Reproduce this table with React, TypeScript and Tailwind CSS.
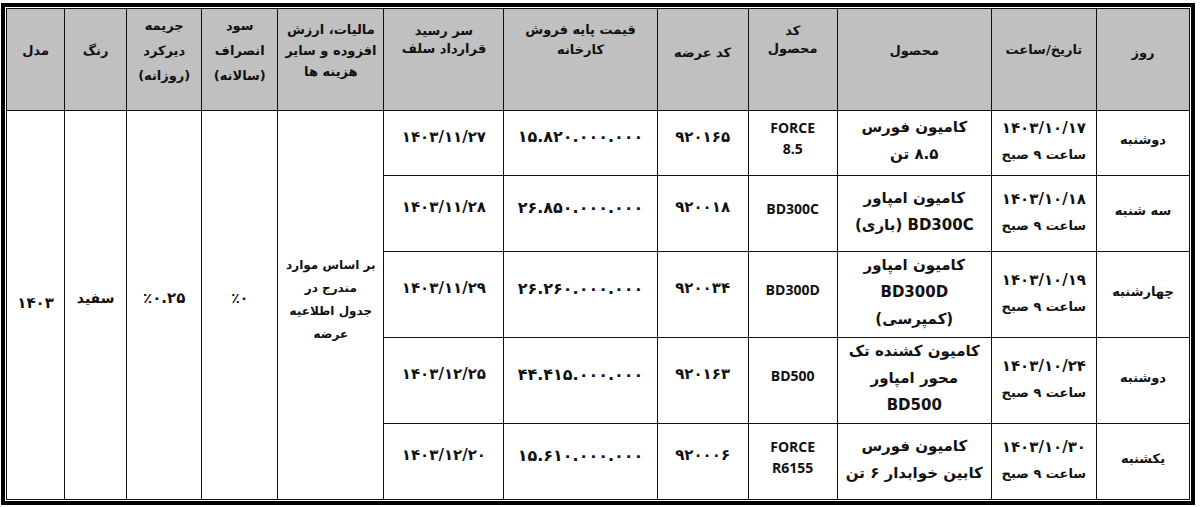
import React from 'react';

const fa = "font-['DejaVu_Sans',sans-serif]";
const en = "font-['Open_Sans',sans-serif]";

interface Row {
  day: string;
  date: string;
  code: string[];
  product: string[];
  offer: string;
  price: string;
  due: string;
  h: string;
}

const rows: Row[] = [
  {
    day: 'دوشنبه',
    date: '۱۴۰۳/۱۰/۱۷',
    code: ['FORCE', '8.5'],
    product: ['کامیون فورس', '۸.۵ تن'],
    offer: '۹۲۰۱۶۵',
    price: '۱۵.۸۲۰.۰۰۰.۰۰۰',
    due: '۱۴۰۳/۱۱/۲۷',
    h: 'h-[65px]',
  },
  {
    day: 'سه شنبه',
    date: '۱۴۰۳/۱۰/۱۸',
    code: ['BD300C'],
    product: ['کامیون امپاور', 'BD300C (باری)'],
    offer: '۹۲۰۰۱۸',
    price: '۲۶.۸۵۰.۰۰۰.۰۰۰',
    due: '۱۴۰۳/۱۱/۲۸',
    h: 'h-[76px]',
  },
  {
    day: 'چهارشنبه',
    date: '۱۴۰۳/۱۰/۱۹',
    code: ['BD300D'],
    product: ['کامیون امپاور', 'BD300D', '(کمپرسی)'],
    offer: '۹۲۰۰۳۴',
    price: '۲۶.۲۶۰.۰۰۰.۰۰۰',
    due: '۱۴۰۳/۱۱/۲۹',
    h: 'h-[85px]',
  },
  {
    day: 'دوشنبه',
    date: '۱۴۰۳/۱۰/۲۴',
    code: ['BD500'],
    product: ['کامیون کشنده تک', 'محور امپاور', 'BD500'],
    offer: '۹۲۰۱۶۳',
    price: '۴۴.۴۱۵.۰۰۰.۰۰۰',
    due: '۱۴۰۳/۱۲/۲۵',
    h: 'h-[86px]',
  },
  {
    day: 'یکشنبه',
    date: '۱۴۰۳/۱۰/۳۰',
    code: ['FORCE', 'R6155'],
    product: ['کامیون فورس', 'کابین خوابدار ۶ تن'],
    offer: '۹۲۰۰۰۶',
    price: '۱۵.۶۱۰.۰۰۰.۰۰۰',
    due: '۱۴۰۳/۱۲/۲۰',
    h: 'h-[76px]',
  },
];

const td = 'border border-[#111] text-center align-middle p-0';
const th = 'border border-[#111] bg-[#c0c0c0] text-center align-middle p-0 font-bold text-[13px] text-[#111]';

const App: React.FC = () => {
  return (
    <div className="w-[1200px] h-[507px] bg-white">
      <div className="ml-px mt-[3px] w-[1194px] border-4 border-black p-px">
        <table dir="rtl" className={`w-[1184px] table-fixed border-collapse ${fa} text-[#111]`}>
          <colgroup>
            <col className="w-[93px]" />
            <col className="w-[105px]" />
            <col className="w-[154px]" />
            <col className="w-[89px]" />
            <col className="w-[91px]" />
            <col className="w-[153px]" />
            <col className="w-[120px]" />
            <col className="w-[106px]" />
            <col className="w-[76px]" />
            <col className="w-[75px]" />
            <col className="w-[62px]" />
            <col className="w-[58px]" />
          </colgroup>
          <thead>
            <tr className="h-[102px]">
              <th className={`${th} pb-[14px]`}>روز</th>
              <th className={`${th} pb-[20px]`}>تاریخ/ساعت</th>
              <th className={`${th} pb-[18px]`}>محصول</th>
              <th className={`${th} pb-[40px] leading-[18px]`}>
                کد
                <br />
                محصول
              </th>
              <th className={`${th} pb-[14px]`}>کد عرضه</th>
              <th className={`${th} pb-[40px] leading-[20px]`}>
                قیمت پایه فروش
                <br />
                کارخانه
              </th>
              <th className={`${th} pb-[40px] leading-[18px]`}>
                سر رسید
                <br />
                قرارداد سلف
              </th>
              <th className={`${th} pb-[18px] leading-[21px]`}>
                مالیات، ارزش
                <br />
                افزوده و سایر
                <br />
                هزینه ها
              </th>
              <th className={`${th} pb-[18px] leading-[25px]`}>
                سود
                <br />
                انصراف
                <br />
                (سالانه)
              </th>
              <th className={`${th} pb-[18px] leading-[25px]`}>
                جریمه
                <br />
                دیرکرد
                <br />
                (روزانه)
              </th>
              <th className={`${th} pb-[18px]`}>رنگ</th>
              <th className={`${th} pb-[18px]`}>مدل</th>
            </tr>
          </thead>
          <tbody>
            {rows.map((r, i) => (
              <tr key={i} className={r.h}>
                <td className={`${td} text-[13px] font-bold pb-[6px]`}>{r.day}</td>
                <td className={`${td} font-bold pb-[4px]`}>
                  <div className="text-[15px] leading-[28px]">{r.date}</div>
                  <div className="text-[13px] leading-[26px]">ساعت ۹ صبح</div>
                </td>
                <td className={`${td} font-bold text-[15px] leading-[27px] pb-[4px]`}>
                  {r.product.map((p, j) => (
                    <div key={j}>{p}</div>
                  ))}
                </td>
                <td className={`${td} ${en} font-bold text-[14px] leading-[21px] pb-[10px]`}>
                  {r.code.map((c, j) => (
                    <div key={j}>{c}</div>
                  ))}
                </td>
                <td className={`${td} font-bold text-[15px] pb-[12px]`}>{r.offer}</td>
                <td className={`${td} font-bold text-[16px] pb-[12px]`}>{r.price}</td>
                <td className={`${td} font-bold text-[15px] pb-[12px]`}>{r.due}</td>
                {i === 0 && (
                  <>
                    <td rowSpan={5} className={`${td} font-bold text-[12px] leading-[23px] pb-[10px]`}>
                      بر اساس موارد
                      <br />
                      مندرج در
                      <br />
                      جدول اطلاعیه
                      <br />
                      عرضه
                    </td>
                    <td rowSpan={5} className={`${td} font-bold text-[14px] pb-[14px]`}>٪۰</td>
                    <td rowSpan={5} className={`${td} font-bold text-[15px] pb-[14px]`}>٪۰.۲۵</td>
                    <td rowSpan={5} className={`${td} font-bold text-[14px] pb-[14px]`}>سفید</td>
                    <td rowSpan={5} className={`${td} font-bold text-[15px] pb-[4px]`}>۱۴۰۳</td>
                  </>
                )}
              </tr>
            ))}
          </tbody>
        </table>
      </div>
    </div>
  );
};

export default App;
